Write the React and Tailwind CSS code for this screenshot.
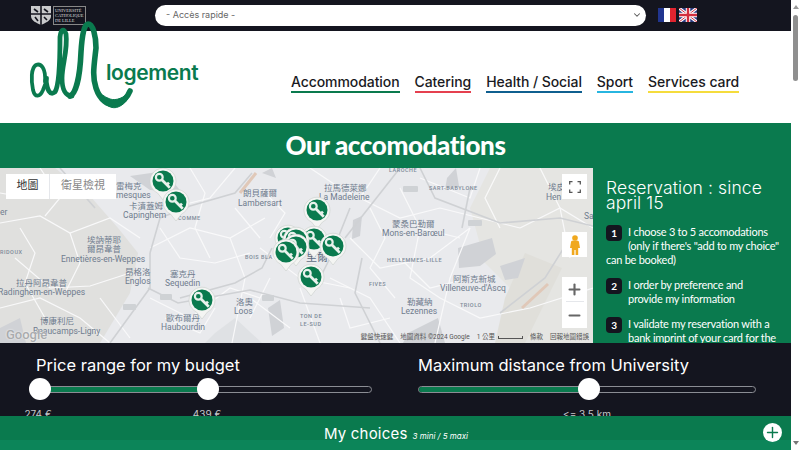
import { Plus, Minus, ChevronDown } from 'lucide-react'

const navItems = [
  { label: 'Accommodation', line: 'border-[#0a7a4e]' },
  { label: 'Catering', line: 'border-[#e5404f]' },
  { label: 'Health / Social', line: 'border-[#0f5f8f]' },
  { label: 'Sport', line: 'border-[#27b5e0]' },
  { label: 'Services card', line: 'border-[#f5dc3c]' },
]

// place names on the map
const mapLabels = [
  { text: '雷梅克', pos: 'left-[116px] top-[13px]' },
  { text: 'mesques', pos: 'left-[116px] top-[22px]' },
  { text: '卡濆蓋姆', pos: 'left-[129px] top-[33px]' },
  { text: 'Capinghem', pos: 'left-[123px] top-[42px]' },
  { text: '朗貝薩爾', pos: 'left-[243px] top-[20px]' },
  { text: 'Lambersart', pos: 'left-[238px] top-[30px]' },
  { text: '埃訥蒂耶', pos: 'left-[87px] top-[67px]' },
  { text: '爾昂韋普', pos: 'left-[87px] top-[76px]' },
  { text: 'Ennetières-en-Weppes', pos: 'left-[61px] top-[86px]' },
  { text: '昂格洛', pos: 'left-[125px] top-[99px]' },
  { text: 'Englos', pos: 'left-[125px] top-[108px]' },
  { text: '塞克丹', pos: 'left-[170px] top-[101px]' },
  { text: 'Sequedin', pos: 'left-[165px] top-[110px]' },
  { text: '拉丹阿昂韋普', pos: 'left-[16px] top-[110px]' },
  { text: 'Radinghem-en-Weppes', pos: 'left-[-2px] top-[119px]' },
  { text: '博康利尼', pos: 'left-[40px] top-[148px]' },
  { text: 'Beaucamps-Ligny', pos: 'left-[33px] top-[158px]' },
  { text: '歐布爾丹', pos: 'left-[166px] top-[145px]' },
  { text: 'Haubourdin', pos: 'left-[161px] top-[154px]' },
  { text: '洛奧', pos: 'left-[236px] top-[129px]' },
  { text: 'Loos', pos: 'left-[234px] top-[138px]' },
  { text: '拉馬德萊娜', pos: 'left-[324px] top-[15px]' },
  { text: 'La Madeleine', pos: 'left-[319px] top-[24px]' },
  { text: '蒙桑巴勒爾', pos: 'left-[392px] top-[51px]' },
  { text: 'Mons-en-Barœul', pos: 'left-[382px] top-[60px]' },
  { text: '阿斯克新城', pos: 'left-[453px] top-[106px]' },
  { text: "Villeneuve-d'Ascq", pos: 'left-[440px] top-[115px]' },
  { text: '勒藏納', pos: 'left-[407px] top-[129px]' },
  { text: 'Lezennes', pos: 'left-[401px] top-[138px]' },
  { text: '埃皮', pos: 'left-[548px] top-[14px]' },
  { text: 'Hen', pos: 'left-[546px] top-[24px]' },
  { text: 'Sa', pos: 'left-[584px] top-[43px]' },
  { text: 'er', pos: 'left-[0px] top-[39px]' },
]

const smallLabels = [
  { text: 'COMME', pos: 'left-[178px] top-[46px]' },
  { text: 'BOIS BLA', pos: 'left-[245px] top-[85px]' },
  { text: 'RIDOUX', pos: 'left-[0px] top-[80px]' },
  { text: 'LAROCHE', pos: 'left-[389px] top-[-2px]' },
  { text: 'SART-BABYLONE', pos: 'left-[429px] top-[16px]' },
  { text: 'HELLEMMES-LILLE', pos: 'left-[387px] top-[88px]' },
  { text: 'FIVES', pos: 'left-[369px] top-[112px]' },
  { text: 'TRIOLO', pos: 'left-[460px] top-[133px]' },
  { text: 'TON DE', pos: 'left-[300px] top-[144px]' },
  { text: 'LE-SUD', pos: 'left-[300px] top-[152px]' },
]

const pins = [
  { pos: 'left-[149px] top-[-1px]' },
  { pos: 'left-[162px] top-[20px]' },
  { pos: 'left-[303px] top-[28px]' },
  { pos: 'left-[300px] top-[57px]' },
  { pos: 'left-[274px] top-[56px]' },
  { pos: 'left-[282px] top-[58px]' },
  { pos: 'left-[282px] top-[65px]' },
  { pos: 'left-[272px] top-[70px]' },
  { pos: 'left-[319px] top-[64px]' },
  { pos: 'left-[297px] top-[95px]' },
  { pos: 'left-[188px] top-[118px]' },
]

const steps = [
  { n: 1, text: `I choose 3 to 5 accomodations (only if there's "add to my choice" can be booked)` },
  { n: 2, text: 'I order by preference and provide my information' },
  { n: 3, text: 'I validate my reservation with a bank imprint of your card for the' },
]

function MapPin({ pos }) {
  return (
    <svg viewBox="0 0 28 34" className={`absolute h-[34px] w-[28px] ${pos}`}>
      <path d="M14 33 L8.5 26 A13 13 0 1 1 19.5 26 Z" fill="#f4f5f3" stroke="#cfd2d0" strokeWidth="0.7" />
      <circle cx="14" cy="14" r="10.5" fill="#0a7a4e" />
      <circle cx="10.3" cy="10.3" r="3.4" fill="none" stroke="#e8f2ec" strokeWidth="2.2" />
      <path d="M12.8 12.8 L20.8 20.8 M17.8 17.8 L20 15.6" fill="none" stroke="#e8f2ec" strokeWidth="2.7" />
    </svg>
  )
}

function MapTiles() {
  return (
    <svg viewBox="0 0 593 175" className="absolute inset-0 h-[175px] w-[593px]">
      <rect width="593" height="175" fill="#e9eaed" />
      {/* country side */}
      <path d="M0 0H55L90 28L118 60L138 85L130 125L100 175H0Z" fill="#e0e0de" />
      <path d="M490 0H593V175H525L520 130L485 95L470 40Z" fill="#e5e5e2" />
      <path d="M525 85L562 100L525 175H495L505 130Z" fill="#e0dfda" />
      <path d="M215 165L235 150L262 175H205Z" fill="#dfe1e4" />
      {/* built up patches */}
      <g fill="#d0d2d6">
        <path d="M458 80L492 70L496 86L480 98L459 100Z" />
        <path d="M500 98L525 90L518 110L505 112Z" />
        <path d="M408 165L438 150L445 175H403Z" />
        <path d="M353 52L362 48L360 68L352 71Z" />
        <path d="M447 10L456 0L459 18L445 22Z" />
        <path d="M130 8L165 3L182 25L150 22Z" />
        <path d="M268 140L280 132L284 160L272 168Z" />
        <path d="M262 5L272 0L276 10Z" />
        <path d="M0 160L20 150L26 175H0Z" />
      </g>
      {/* small streets */}
      <g fill="none" stroke="#f9f9fa" strokeWidth="1.2">
        <path d="M0 55L40 48L70 65L110 50L140 70" />
        <path d="M15 90L50 120L90 118L130 105" />
        <path d="M0 140L40 130L80 150L110 175" />
        <path d="M40 0L60 30L45 48" />
        <path d="M100 130L130 170" />
        <path d="M150 80L190 60L230 70L265 50" />
        <path d="M170 40L210 30L235 0" />
        <path d="M150 130L190 150L230 120L260 130" />
        <path d="M230 70L245 110L232 175" />
        <path d="M380 0L360 30L400 50L440 40L520 60" />
        <path d="M350 70L380 100L430 90L470 60" />
        <path d="M400 20L420 60L410 110L440 130" />
        <path d="M330 110L370 130L400 175" />
        <path d="M440 130L480 150L530 140L593 120" />
        <path d="M520 60L560 40L593 60" />
        <path d="M540 0L560 40L570 90" />
        <path d="M470 60L450 110L435 175" />
        <path d="M310 0L340 20L360 30" />
        <path d="M300 120L320 175" />
        <path d="M260 80L300 110L350 120" />
        <path d="M0 25L30 30L55 15L80 30" />
        <path d="M20 60L35 85L25 115L45 150" />
        <path d="M70 65L80 95L65 125" />
        <path d="M160 60L180 90L215 95L250 85" />
        <path d="M190 0L205 25L195 60L210 90" />
        <path d="M165 150L200 165L215 140" />
        <path d="M260 20L285 45L270 70" />
        <path d="M235 40L260 70" />
        <path d="M370 40L385 70L370 100L395 130" />
        <path d="M420 60L460 70M400 90L430 120L470 110" />
        <path d="M420 10L470 30L480 0" />
        <path d="M500 60L485 30L500 0" />
        <path d="M340 130L350 160L390 150" />
        <path d="M250 130L290 160M270 110L250 150" />
      </g>
      {/* main roads */}
      <g fill="none" stroke="#cfd1d4" strokeWidth="1.6">
        <path d="M60 0L95 40" />
        <path d="M150 85L160 50L190 38L235 25L252 5" />
        <path d="M148 120L178 135L250 122L300 135L370 140" />
        <path d="M180 130L235 115L262 100L272 80" />
        <path d="M110 175L150 120L150 85" />
        <path d="M350 40L330 90L320 110" />
        <path d="M420 0L435 30L500 55L560 50L593 58" />
        <path d="M362 90L355 125L380 175" />
        <path d="M400 0L345 70" />
        <path d="M500 145L545 110L570 70" />
        <path d="M462 60L470 20" />
      </g>
      {/* named roads */}
      <path d="M240 25L256 5" stroke="#e0c8b8" strokeWidth="3" />
      <path d="M522 140L548 116" stroke="#e0c8b8" strokeWidth="3" />
      {/* route shields */}
      <g fill="#cfd2d5">
        <rect x="160" y="126" width="12" height="6" rx="1" />
        <rect x="123" y="136" width="13" height="6" rx="1" />
        <rect x="262" y="127" width="12" height="6" rx="1" />
        <rect x="403" y="18" width="15" height="6" rx="1" />
        <rect x="468" y="52" width="14" height="6" rx="1" />
      </g>
    </svg>
  )
}

function GoogleMap() {
  return (
    <div className="relative h-full flex-1 overflow-hidden bg-[#e9eaed] font-['Roboto','Noto_Sans_CJK_TC',sans-serif]">
      <MapTiles />

      {mapLabels.map((l) => (
        <span key={l.text} className={`absolute whitespace-nowrap text-[8.5px] leading-[10px] text-[#6f7c8e] ${l.pos}`}>
          {l.text}
        </span>
      ))}
      {smallLabels.map((l) => (
        <span key={l.text} className={`absolute whitespace-nowrap text-[5.5px] font-medium leading-[8px] tracking-[0.5px] text-[#7e8a99] ${l.pos}`}>
          {l.text}
        </span>
      ))}
      <span className="absolute left-[306px] top-[83px] text-[11px] leading-[14px] text-[#5d6d82]">里爾</span>

      {pins.map((p) => (
        <MapPin key={p.pos} pos={p.pos} />
      ))}

      {/* map type */}
      <div className="absolute left-[6px] top-[6px] flex h-[25px] w-[110px] items-center bg-white text-[11px]">
        <span className="flex h-full w-[44px] items-center justify-center border-r border-gray-200 text-[#333]">地圖</span>
        <span className="flex-1 text-center text-[#888]">衛星檢視</span>
      </div>

      {/* fullscreen */}
      <div className="absolute left-[562px] top-[6px] flex h-[25px] w-[25px] items-center justify-center bg-white">
        <svg viewBox="0 0 12 12" className="h-[12px] w-[12px]" fill="none" stroke="#555" strokeWidth="1.3">
          <path d="M0.7 3.5V0.7H3.5M8.5 0.7H11.3V3.5M11.3 8.5V11.3H8.5M3.5 11.3H0.7V8.5" />
        </svg>
      </div>

      {/* pegman */}
      <div className="absolute left-[562px] top-[64px] flex h-[25px] w-[25px] items-center justify-center bg-white">
        <svg viewBox="0 0 12 20" className="h-[20px] w-[12px]" fill="#f0a81e">
          <circle cx="6" cy="3" r="2.8" />
          <path d="M2 7C2 5.5 3.5 5.5 6 5.5S10 5.5 10 7L11 13H9.2V20H6.6V15H5.4V20H2.8V13H1Z" />
        </svg>
      </div>

      {/* zoom */}
      <div className="absolute left-[562px] top-[109px] flex h-[51px] w-[25px] flex-col items-center bg-white">
        <div className="flex h-[25px] w-[18px] items-center justify-center border-b border-gray-200">
          <Plus size={17} strokeWidth={3} color="#666" />
        </div>
        <div className="flex h-[26px] items-center justify-center">
          <Minus size={17} strokeWidth={3} color="#666" />
        </div>
      </div>

      {/* google logo */}
      <span className="absolute left-[6px] top-[159px] text-[13px] font-medium leading-[15px] text-[#a9abad] [text-shadow:0_0_2px_#fff]">Google</span>

      {/* attribution */}
      <div className="absolute right-[4px] bottom-[1px] flex items-center gap-[7px] whitespace-nowrap text-[6.5px] leading-[9px] text-[#555]">
        <span>鍵盤快速鍵</span>
        <span>地圖資料 ©2024 Google</span>
        <span className="flex items-center gap-[3px]">
          1 公里
          <span className="inline-block h-[3px] w-[25px] border-x border-b border-[#555]"></span>
        </span>
        <span>條款</span>
        <span>回報地圖錯誤</span>
      </div>
    </div>
  )
}

function Logo() {
  return (
    <div className="relative h-full w-[190px] shrink-0">
      {/* viewBox is in page pixels, logo overflows above the white band */}
      <svg viewBox="0 0 140 120" className="absolute left-[-30px] top-[-31px] z-10 h-[120px] w-[140px]" fill="none" stroke="#0a7a4e" strokeLinecap="round" strokeLinejoin="round">
        <path d="M45 82C46 68 41 63 36 65C31 68 31 80 33 90C35 98 40 97 43 90C45 85 47 80 47 78" strokeWidth="3.8" />
        <path d="M46 80C47 90 50 96 55 92C60 84 60 50 60 37C61 29 64 28 66 34C68 50 62 65 62 78C62 90 66 96 72 96" strokeWidth="4.8" />
        <path d="M70 96C76 94 80 76 81 52C82 36 84 24 88 24C93 24 96 36 96 48C94 66 92 76 96 88C100 100 108 106 116 104C124 102 128 96 130 91" strokeWidth="5.6" />
        <path d="M97 90C101 103 110 110 118 107C126 104 130 96 130 91C124 98 116 101 110 99C104 97 100 93 97 90Z" fill="#0a7a4e" strokeWidth="1" />
      </svg>
      <span className="absolute left-[76px] top-[29px] font-['Inter',sans-serif] text-[21px] font-semibold leading-[26px] tracking-[-0.4px] text-[#0a7a4e]">logement</span>
    </div>
  )
}

function FrFlag() {
  return (
    <svg viewBox="0 0 18 14" className="h-[14px] w-[18px]">
      <rect width="6" height="14" fill="#21358f" />
      <rect x="6" width="6" height="14" fill="#fff" />
      <rect x="12" width="6" height="14" fill="#e0242f" />
    </svg>
  )
}

function UkFlag() {
  return (
    <svg viewBox="0 0 18 14" className="h-[14px] w-[18px]">
      <rect width="18" height="14" fill="#2b3a80" />
      <path d="M0 0L18 14M18 0L0 14" stroke="#fff" strokeWidth="3" />
      <path d="M0 0L18 14M18 0L0 14" stroke="#d22f3f" strokeWidth="1" />
      <path d="M9 0V14M0 7H18" stroke="#fff" strokeWidth="4.5" />
      <path d="M9 0V14M0 7H18" stroke="#d22f3f" strokeWidth="2.4" />
    </svg>
  )
}

function Slider({ title, titleClass, trackClass, fill, handles, labels }) {
  return (
    <div className={trackClass}>
      <h3 className={`mb-[9px] text-[16.5px] leading-[24px] text-white ${titleClass}`}>{title}</h3>
      <div className="relative h-[7px] rounded-full border border-[#8b8d94] bg-[#14151f]">
        <div className={`absolute top-0 h-full bg-[#0a7a4e] ${fill}`}></div>
        {handles.map((h) => (
          <span key={h} className={`absolute top-[-9px] h-[22px] w-[22px] rounded-full bg-white ${h}`}></span>
        ))}
      </div>
      {labels.map((l) => (
        <span key={l.text} className={`absolute top-[65px] -translate-x-1/2 whitespace-nowrap text-[10px] leading-[12px] text-[#c5c6ca] ${l.pos}`}>
          {l.text}
        </span>
      ))}
    </div>
  )
}

export default function App() {
  return (
    <div className="flex h-[450px] w-[800px] overflow-hidden bg-white font-['Inter',sans-serif]">
      <div className="relative flex h-full w-[791px] flex-col overflow-hidden">
        {/* Top bar */}
        <div className="flex h-[31px] items-center bg-[#14151f] pb-[1px]">
          <div className="ml-[30px] flex h-[21px] w-[51px] shrink-0 items-center gap-[1px]">
            <svg viewBox="0 0 22 20" className="h-[20px] w-[22px] shrink-0">
              <path d="M1 1H21V11C21 16 15 18 11 20C7 18 1 16 1 11Z" fill="#c9cacc" />
              <path d="M1 9H21M11 1V20M4 4L8 7M14 4L18 7M5 12L8 16M14 12L17 15" stroke="#14151f" strokeWidth="1.6" />
            </svg>
            <div className="shrink-0 border border-[#888] px-[1px] py-[1px] font-['Liberation_Serif',serif] text-[4.5px] leading-[5px] text-[#ddd]">
              <div>UNIVERSITÉ</div>
              <div>CATHOLIQUE</div>
              <div>DE LILLE</div>
            </div>
          </div>
          <div className="ml-[74px] flex h-[21px] w-[491px] items-center justify-between rounded-full bg-white pl-[11px] pr-[4px] text-[9px] text-[#666]">
            <span>- Accès rapide -</span>
            <ChevronDown size={10} strokeWidth={2.5} color="#555" />
          </div>
          <div className="ml-[12px] flex gap-[3px]">
            <FrFlag />
            <UkFlag />
          </div>
        </div>

        {/* Header */}
        <div className="flex h-[92px] items-start pl-[30px]">
          <Logo />
          <nav className="ml-[71px] mt-[42px] flex gap-[15px]">
            {navItems.map((item) => (
              <a key={item.label} className={`border-b-2 ${item.line} text-[14px] font-medium leading-[18px] tracking-[-0.08px] text-[#1a1a22]`}>
                {item.label}
              </a>
            ))}
          </nav>
        </div>

        {/* Title */}
        <div className="flex h-[45px] items-center justify-center bg-[#0a7a4e]">
          <h1 className="font-['Lato',sans-serif] text-[26px] font-black tracking-[-0.4px] text-white">Our accomodations</h1>
        </div>

        {/* Map and steps */}
        <div className="flex h-[175px]">
          <GoogleMap />
          <aside className="w-[198px] overflow-hidden bg-[#0a7a4e] pl-[13px] pr-[12px] pt-[12px] text-white">
            <h2 className="text-[17.5px] font-light leading-[15px] tracking-[0.1px]">Reservation : since april 15</h2>
            <ol className="mt-[15px] font-['Lato',sans-serif] text-[11px] leading-[14px] tracking-[-0.25px]">
              {steps.map((s) => (
                <li key={s.n} className="mb-[11px] flow-root">
                  <span className="float-left mr-[6px] flex h-[16px] w-[16px] items-center justify-center rounded-sm bg-[#14151f] text-[10px] font-bold">
                    {s.n}
                  </span>
                  {s.text}
                </li>
              ))}
            </ol>
          </aside>
        </div>

        {/* Filters */}
        <div className="relative flex h-[107px] bg-[#14151f] pt-[10px]">
          <Slider
            title="Price range for my budget"
            titleClass="ml-[-4px]"
            trackClass="ml-[40px] w-[332px]"
            fill="left-0 w-[168px]"
            handles={['left-[-12px]', 'left-[156px]']}
            labels={[
              { text: '274 €', pos: 'left-[38px]' },
              { text: '439 €', pos: 'left-[207px]' },
            ]}
          />
          <Slider
            title="Maximum distance from University"
            titleClass=""
            trackClass="ml-[46px] w-[338px]"
            fill="left-0 w-[171px] rounded-l-full"
            handles={['left-[159px]']}
            labels={[{ text: '<= 3.5 km', pos: 'left-[587px]' }]}
          />
        </div>

        {/* My choices */}
        <div className="absolute bottom-0 left-0 right-0 h-[34px] bg-[#0c8559]">
          <div className="relative flex h-[24px] items-start justify-center gap-[5px] bg-[#0a7a4e] pl-[1px] text-white">
            <span className="mt-[9px] text-[15px] leading-[18px] tracking-[0.2px]">My choices</span>
            <span className="mt-[15px] text-[8px] italic leading-[10px]">3 mini / 5 maxi</span>
            <span className="absolute left-[763px] top-[7px] flex h-[19px] w-[19px] items-center justify-center rounded-full bg-white">
              <Plus size={17} strokeWidth={2} color="#0a7a4e" />
            </span>
          </div>
        </div>
      </div>

      {/* Page scrollbar */}
      <div className="flex h-full w-[9px] flex-col items-center justify-between bg-white py-[5px]">
        <span className="h-0 w-0 border-x-[3px] border-b-[4px] border-x-transparent border-b-[#999]"></span>
        <span className="absolute top-[15px] h-[66px] w-[5px] rounded-full bg-[#8f8f8f]"></span>
        <span className="h-0 w-0 border-x-[3px] border-t-[4px] border-x-transparent border-t-[#777]"></span>
      </div>
    </div>
  )
}
